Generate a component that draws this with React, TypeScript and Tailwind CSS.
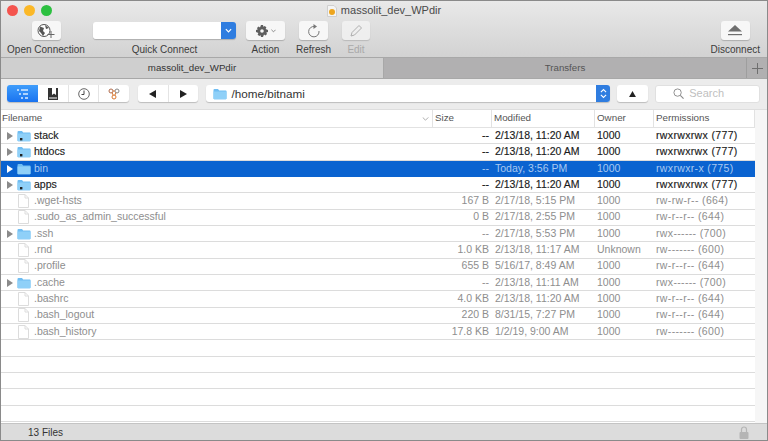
import React from 'react';

type FileRow = {
    name: string;
    size: string;
    modified: string;
    owner: string;
    perms: string;
    kind: 'linkdir' | 'dir' | 'file';
    strong?: boolean;
    selected?: boolean;
};

const ROWS: FileRow[] = [
    { name: 'stack', size: '--', modified: '2/13/18, 11:20 AM', owner: '1000', perms: 'rwxrwxrwx (777)', kind: 'linkdir', strong: true },
    { name: 'htdocs', size: '--', modified: '2/13/18, 11:20 AM', owner: '1000', perms: 'rwxrwxrwx (777)', kind: 'linkdir', strong: true },
    { name: 'bin', size: '--', modified: 'Today, 3:56 PM', owner: '1000', perms: 'rwxrwxr-x (775)', kind: 'dir', selected: true },
    { name: 'apps', size: '--', modified: '2/13/18, 11:20 AM', owner: '1000', perms: 'rwxrwxrwx (777)', kind: 'linkdir', strong: true },
    { name: '.wget-hsts', size: '167 B', modified: '2/17/18, 5:15 PM', owner: '1000', perms: 'rw-rw-r-- (664)', kind: 'file' },
    { name: '.sudo_as_admin_successful', size: '0 B', modified: '2/17/18, 2:55 PM', owner: '1000', perms: 'rw-r--r-- (644)', kind: 'file' },
    { name: '.ssh', size: '--', modified: '2/17/18, 5:53 PM', owner: '1000', perms: 'rwx------ (700)', kind: 'dir' },
    { name: '.rnd', size: '1.0 KB', modified: '2/13/18, 11:17 AM', owner: 'Unknown', perms: 'rw------- (600)', kind: 'file' },
    { name: '.profile', size: '655 B', modified: '5/16/17, 8:49 AM', owner: '1000', perms: 'rw-r--r-- (644)', kind: 'file' },
    { name: '.cache', size: '--', modified: '2/13/18, 11:11 AM', owner: '1000', perms: 'rwx------ (700)', kind: 'dir' },
    { name: '.bashrc', size: '4.0 KB', modified: '2/13/18, 11:20 AM', owner: '1000', perms: 'rw-r--r-- (644)', kind: 'file' },
    { name: '.bash_logout', size: '220 B', modified: '8/31/15, 7:27 PM', owner: '1000', perms: 'rw-r--r-- (644)', kind: 'file' },
    { name: '.bash_history', size: '17.8 KB', modified: '1/2/19, 9:00 AM', owner: '1000', perms: 'rw------- (600)', kind: 'file' },
];

const Folder = ({ link, className = '' }: { link?: boolean; className?: string }) => (
    <svg viewBox="0 0 14 12" className={`w-[14px] h-[12px] shrink-0 ${className}`}>
        <path d="M0.5 2 Q0.5 1 1.5 1 H5 L6.2 2.4 H12.8 Q13.5 2.4 13.5 3.2 V10.5 Q13.5 11.3 12.7 11.3 H1.3 Q0.5 11.3 0.5 10.5 Z" fill="#6fbdf2" />
        <path d="M0.5 3.6 H13.5 V10.5 Q13.5 11.3 12.7 11.3 H1.3 Q0.5 11.3 0.5 10.5 Z" fill="#8fd0f8" />
        {link && <rect x="3" y="8" width="2.4" height="2.4" fill="#222" />}
    </svg>
);

const FileIcon = () => (
    <svg viewBox="0 0 11 14" className="w-[11px] h-[14px] shrink-0">
        <path d="M0.5 0.5 H7 L10.5 4 V13.5 H0.5 Z" fill="#fff" stroke="#dcdcdc" />
        <path d="M7 0.5 V4 H10.5" fill="none" stroke="#dcdcdc" />
    </svg>
);

const Disclosure = ({ selected }: { selected?: boolean }) => (
    <svg viewBox="0 0 6 8" className="w-[6px] h-[8px]">
        <path d="M0 0 L6 4 L0 8 Z" fill={selected ? '#fff' : '#8a8a8a'} />
    </svg>
);

const ToolButton = ({ label, width, muted, children }: { label: string; width: string; muted?: boolean; children: React.ReactNode }) => (
    <div className="flex flex-col items-center">
        <div className={`h-[19px] ${width} rounded-[3px] bg-[#f7f7f7] shadow-[0_1px_1px_rgba(0,0,0,0.2)] flex items-center justify-center ${muted ? 'opacity-70' : ''}`}>
            {children}
        </div>
        <span className={`mt-[3px] text-[10px] leading-[14px] whitespace-nowrap ${muted ? 'text-[#a9a9a9]' : 'text-[#3c3c3c]'}`}>{label}</span>
    </div>
);

const Row = ({ row }: { row: FileRow }) => {
    const tone = row.selected
        ? 'bg-[#0a63d0] text-[#a9c9f0]'
        : row.strong
            ? 'bg-white text-[#1a1a1a] [-webkit-text-stroke:0.15px_#1a1a1a] border-b border-[#dcdcdc]'
            : 'bg-white text-[#8e8e8e] border-b border-[#dcdcdc]';
    return (
        <div className={`h-[16.33px] flex items-center text-[10.5px] ${tone}`}>
            <div className="w-[15px] pl-[6px] shrink-0 flex items-center">
                {row.kind !== 'file' && <Disclosure selected={row.selected} />}
            </div>
            <span className="w-[18px] pr-[3px] flex justify-center shrink-0">
                {row.kind === 'file' ? <FileIcon /> : <Folder link={row.kind === 'linkdir'} />}
            </span>
            <span className="w-[400px] shrink-0 truncate">{row.name}</span>
            <div className="w-[55px] text-right shrink-0">{row.size}</div>
            <div className="w-[108px] pl-[6px] shrink-0 whitespace-nowrap">{row.modified}</div>
            <div className="w-[59px] shrink-0">{row.owner}</div>
            <div className="flex-1 whitespace-nowrap tracking-[0.35px]">{row.perms}</div>
        </div>
    );
};

const HeaderCell = ({ label, width, right }: { label: string; width: string; right?: React.ReactNode }) => (
    <div className={`${width} h-full shrink-0 flex items-center justify-between pl-[2px] border-r border-[#e2e2e2]`}>
        <span>{label}</span>
        {right}
    </div>
);

export default function App() {
    return (
        <div className="w-[768px] h-[441px] overflow-hidden flex flex-col bg-white border-l border-t border-r border-[#8a8a8a] font-['Liberation_Sans',Arial,sans-serif]">
            {/* titlebar and toolbar */}
            <div className="h-[56px] shrink-0 bg-gradient-to-b from-[#e9e9e9] to-[#d2d2d2] flex flex-col">
                <div className="h-[20px] relative flex items-center justify-center">
                    <div className="absolute left-[6px] top-[4px] flex gap-[6px]">
                        <span className="w-[11px] h-[11px] rounded-full bg-[#f4544e]" />
                        <span className="w-[11px] h-[11px] rounded-full bg-[#fbb827]" />
                        <span className="w-[11px] h-[11px] rounded-full bg-[#2cc040]" />
                    </div>
                    <svg viewBox="0 0 10 12" className="w-[10px] h-[12px] mr-[4px]">
                        <path d="M0.5 0.5 H7 L9.5 3 V11.5 H0.5 Z" fill="#f4f4f4" stroke="#cfcfcf" />
                        <circle cx="5" cy="7" r="3" fill="#eda51e" />
                    </svg>
                    <span className="text-[11px] text-[#4a4a4a]">massolit_dev_WPdir</span>
                </div>
                <div className="flex items-start pl-[6px] pr-[7px] pt-[1px]">
                    <div className="w-[78px] flex justify-center">
                        <ToolButton label="Open Connection" width="w-[29px]">
                            <svg viewBox="0 0 20 16" className="w-[20px] h-[16px]" fill="none">
                                <circle cx="8" cy="7.5" r="6" stroke="#555" fill="#fff" />
                                <path d="M4 3.5 L8 5 L7 8 L9 10 L7 13 L5 10 L3 8 Z M9 2 L13 5 L10 6 Z" fill="#555" />
                                <path d="M15 8 V15 M11.5 11.5 H18.5" stroke="#666" />
                            </svg>
                        </ToolButton>
                    </div>
                    <div className="w-[143px] ml-[8px] flex flex-col items-center">
                        <div className="h-[17px] mt-[1px] w-[143px] flex rounded-[3px] overflow-hidden shadow-[0_1px_1px_rgba(0,0,0,0.2)]">
                            <div className="flex-1 bg-white" />
                            <div className="w-[15px] bg-[#2f7de0] flex items-center justify-center">
                                <svg viewBox="0 0 8 5" className="w-[7px] h-[5px]" fill="none"><path d="M1 1 L4 4 L7 1" stroke="#fff" strokeWidth="1.4" /></svg>
                            </div>
                        </div>
                        <span className="mt-[4px] text-[10px] leading-[14px] text-[#3c3c3c]">Quick Connect</span>
                    </div>
                    <div className="ml-[10px] flex gap-[11px]">
                        <ToolButton label="Action" width="w-[39px]">
                            <svg viewBox="0 0 12 12" className="w-[12px] h-[12px]">
                                <path d="M5 0 H7 L7.4 1.7 L8.9 1 L10.4 2.5 L9.6 4 L12 5 V7 L10.3 7.4 L11 8.9 L9.5 10.4 L8 9.6 L7 12 H5 L4.6 10.3 L3.1 11 L1.6 9.5 L2.4 8 L0 7 V5 L1.7 4.6 L1 3.1 L2.5 1.6 L4 2.4 Z" fill="#5e5e5e" />
                                <circle cx="6" cy="6" r="1.8" fill="#f7f7f7" />
                            </svg>
                            <svg viewBox="0 0 6 4" className="w-[5px] h-[4px] ml-[3px]" fill="none"><path d="M0.5 0.5 L3 3 L5.5 0.5" stroke="#777" /></svg>
                        </ToolButton>
                        <ToolButton label="Refresh" width="w-[29px]">
                            <svg viewBox="0 0 14 14" className="w-[14px] h-[14px]" fill="none">
                                <path d="M7.5 2.5 A5.2 5.2 0 1 0 12 7" stroke="#777" />
                                <path d="M6.5 0 L10 2.5 L6.5 5 Z" fill="#777" />
                            </svg>
                        </ToolButton>
                        <ToolButton label="Edit" width="w-[28px]" muted>
                            <svg viewBox="0 0 14 14" className="w-[14px] h-[14px]" fill="none">
                                <path d="M2 12 L3 8.5 L10 1.5 L12.5 4 L5.5 11 Z" stroke="#9a9a9a" />
                            </svg>
                        </ToolButton>
                    </div>
                    <div className="ml-auto">
                        <ToolButton label="Disconnect" width="w-[29px]">
                            <svg viewBox="0 0 14 11" className="w-[14px] h-[11px]">
                                <path d="M7 0 L14 6.5 H0 Z" fill="#6e6e6e" />
                                <rect x="0" y="9" width="14" height="1.2" fill="#6e6e6e" />
                            </svg>
                        </ToolButton>
                    </div>
                </div>
            </div>

            {/* tabs */}
            <div className="h-[22px] shrink-0 flex text-[9.7px] border-y border-[#a8a8a8]">
                <div className="w-[383px] bg-[#cfcfcf] flex items-center justify-center text-[#333] border-r border-[#a8a8a8]">massolit_dev_WPdir</div>
                <div className="flex-1 bg-[#b1b0b1] flex items-center justify-center text-[#555]">Transfers</div>
                <div className="w-[21px] bg-[#b1b0b1] border-l border-[#9e9e9e] flex items-center justify-center">
                    <svg viewBox="0 0 11 11" className="w-[11px] h-[11px]"><path d="M5.5 0 V11 M0 5.5 H11" stroke="#6f6f6f" /></svg>
                </div>
            </div>

            {/* path bar */}
            <div className="h-[30px] shrink-0 bg-[#ececec] flex items-center pl-[6px] pr-[7px] pb-[1px]">
                <div className="flex h-[17px] w-[122px] rounded-[3px] overflow-hidden bg-white shadow-[0_1px_1px_rgba(0,0,0,0.2)]">
                    <div className="w-[31px] bg-gradient-to-b from-[#3f9dfb] to-[#1a73f0] flex items-center justify-center">
                        <svg viewBox="0 0 13 10" className="w-[13px] h-[10px]" fill="none">
                            <path d="M1 1 H3 M3 5 H5 M5 9 H7 M5 1 H12 M7 5 H12 M9 9 H12" stroke="#d9ecff" strokeWidth="1.5" />
                        </svg>
                    </div>
                    <div className="w-[31px] border-r border-[#e4e4e4] flex items-center justify-center">
                        <svg viewBox="0 0 10 12" className="w-[10px] h-[12px]">
                            <path d="M0 0 H10 V12 H0 Z" fill="#333" />
                            <path d="M4 0 H8 V7 L6 5.5 L4 7 Z" fill="#fff" />
                            <path d="M1 10 H9" stroke="#fff" />
                        </svg>
                    </div>
                    <div className="w-[30px] border-r border-[#e4e4e4] flex items-center justify-center">
                        <svg viewBox="0 0 12 12" className="w-[12px] h-[12px]" fill="none">
                            <circle cx="6" cy="6" r="5.3" stroke="#666" />
                            <path d="M6 2.5 V6.5 H3.5" stroke="#444" />
                        </svg>
                    </div>
                    <div className="flex-1 flex items-center justify-center">
                        <svg viewBox="0 0 12 12" className="w-[12px] h-[12px]" fill="none">
                            <circle cx="3" cy="3" r="2" stroke="#b06a4a" />
                            <circle cx="9" cy="3" r="2" stroke="#888" />
                            <circle cx="6" cy="9" r="2" stroke="#d9772f" />
                            <path d="M4 4.5 L5.2 7.3 M8 4.5 L6.8 7.3 M5 3 H7" stroke="#d9772f" />
                        </svg>
                    </div>
                </div>
                <div className="ml-[9px] flex h-[17px] w-[61px] rounded-[3px] bg-white shadow-[0_1px_1px_rgba(0,0,0,0.2)]">
                    <div className="flex-1 border-r border-[#e4e4e4] flex items-center justify-center">
                        <svg viewBox="0 0 7 8" className="w-[7px] h-[8px]"><path d="M7 0 V8 L0 4 Z" fill="#222" /></svg>
                    </div>
                    <div className="flex-1 flex items-center justify-center">
                        <svg viewBox="0 0 7 8" className="w-[7px] h-[8px]"><path d="M0 0 V8 L7 4 Z" fill="#222" /></svg>
                    </div>
                </div>
                <div className="ml-[8px] flex h-[17px] w-[405px] rounded-[3px] overflow-hidden bg-white shadow-[0_1px_1px_rgba(0,0,0,0.2)]">
                    <div className="flex-1 flex items-center pl-[7px] text-[11.7px] text-[#333]">
                        <Folder className="mr-[4px]" />
                        <span>/home/bitnami</span>
                    </div>
                    <div className="w-[14px] bg-[#2f7de0] flex items-center justify-center">
                        <svg viewBox="0 0 8 12" className="w-[7px] h-[11px]" fill="none"><path d="M1 4.5 L4 1.5 L7 4.5 M1 7.5 L4 10.5 L7 7.5" stroke="#fff" strokeWidth="1.2" /></svg>
                    </div>
                </div>
                <div className="ml-[7px] h-[17px] w-[31px] rounded-[3px] bg-white shadow-[0_1px_1px_rgba(0,0,0,0.2)] flex items-center justify-center">
                    <svg viewBox="0 0 8 7" className="w-[7px] h-[6px]"><path d="M4 0 L8 7 H0 Z" fill="#222" /></svg>
                </div>
                <div className="ml-[7px] h-[18px] w-[105px] rounded-[3px] bg-white border border-[#e0e0e0] flex items-center pl-[17px] text-[11px] text-[#c0c0c0]">
                    <svg viewBox="0 0 12 12" className="w-[11px] h-[11px] mr-[5px]" fill="none">
                        <circle cx="5" cy="5" r="4" stroke="#888" />
                        <path d="M8 8 L11.5 11.5" stroke="#888" strokeWidth="1.2" />
                    </svg>
                    <span>Search</span>
                </div>
            </div>

            {/* file table */}
            <div className="flex-1 min-h-0 flex bg-[#f6f6f6] border-t border-[#dedede]">
                <div className="w-[754px] shrink-0 bg-white flex flex-col">
                    <div className="h-[18px] shrink-0 flex text-[9.8px] text-[#555] border-b border-[#e2e2e2]">
                        <div className="w-[432px] h-full shrink-0 flex items-center justify-between pl-[1px] border-r border-[#e2e2e2]">
                            <span>Filename</span>
                            <svg viewBox="0 0 8 5" className="w-[7px] h-[4px] mr-[3px]" fill="none"><path d="M0.5 0.5 L4 4 L7.5 0.5" stroke="#999" /></svg>
                        </div>
                        <HeaderCell label="Size" width="w-[59px]" />
                        <HeaderCell label="Modified" width="w-[103px]" />
                        <HeaderCell label="Owner" width="w-[59px]" />
                        <HeaderCell label="Permissions" width="flex-1" />
                    </div>
                    {ROWS.map((row) => (
                        <Row key={row.name} row={row} />
                    ))}
                    {[0, 1, 2, 3, 4].map((i) => (
                        <div key={i} className="h-[16.33px] shrink-0 border-b border-[#dcdcdc]" />
                    ))}
                </div>
            </div>

            {/* status bar */}
            <div className="h-[18px] shrink-0 bg-[#dcdcdc] border-t border-[#c4c4c4] border-b border-b-[#8a8a8a] flex items-center justify-between pl-[27px] pr-[18px] text-[10px] text-[#333] font-medium">
                <span>13 Files</span>
                <svg viewBox="0 0 10 13" className="w-[10px] h-[13px]">
                    <path d="M2.5 6 V3.5 A2.5 2.5 0 0 1 7.5 3.5 V6" fill="none" stroke="#b5b5b5" strokeWidth="1.2" />
                    <rect x="0.5" y="6" width="9" height="7" rx="1" fill="#b5b5b5" />
                </svg>
            </div>
        </div>
    );
}
